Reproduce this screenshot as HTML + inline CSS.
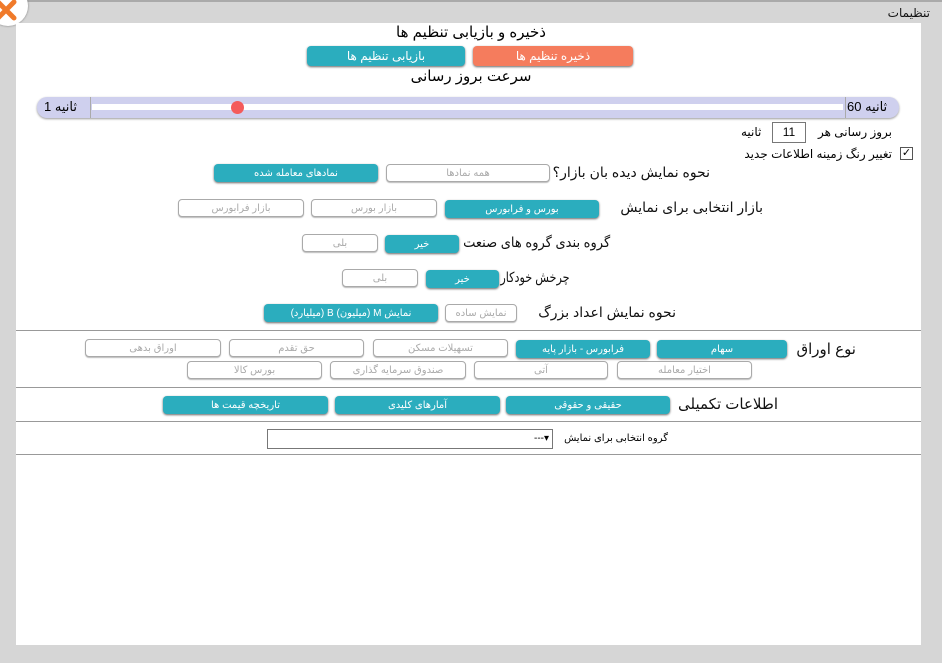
<!DOCTYPE html>
<html><head><meta charset="utf-8"><style>
*{box-sizing:border-box;margin:0;padding:0}
body{width:942px;height:663px;background:#d6d6d6;position:relative;overflow:hidden;font-family:"Liberation Sans","DejaVu Sans",sans-serif;}
.a{position:absolute;white-space:nowrap}
.panel{position:absolute;left:16px;top:23px;width:905px;height:622px;background:#fff}
.b{position:absolute;height:18px;border-radius:4px;font-size:10px;line-height:19px;text-align:center;color:#fff;background:#2badbe;box-shadow:0 1px 2px #666;direction:rtl;white-space:nowrap}
.w{background:#fff;color:#aaa;border:1px solid #aaa;box-shadow:0 1px 1px #bbb;line-height:17px}
.o{background:#f57c5d}
.l{position:absolute;font-size:14px;direction:rtl;color:#111;white-space:nowrap;z-index:2;transform-origin:right center}
.hr{position:absolute;left:16px;width:905px;height:1px;background:#999}
</style></head><body>
<div class="a" style="left:0;top:0;width:942px;height:2px;background:#aaa"></div>
<div class="a" style="right:12px;top:6px;font-size:12px;color:#111">تنظیمات</div>
<div class="a" style="left:-12px;top:-14px;width:40px;height:40px;border-radius:50%;background:#fff;box-shadow:0 0 2px #777"></div>
<svg class="a" style="left:0;top:0" width="20" height="22"><path d="M-2 2 L14 18 M14 2 L-2 18" stroke="#f07a2a" stroke-width="5" stroke-linecap="round"/></svg>
<div class="panel"></div>
<div class="a" style="left:0;width:942px;top:23px;text-align:center;font-size:15px">ذخیره و بازیابی تنظیم ها</div>
<div class="b" style="left:307px;top:46px;width:158px;height:20px;line-height:20px;font-size:12px">بازیابی تنظیم ها</div>
<div class="b o" style="left:473px;top:46px;width:160px;height:20px;line-height:20px;font-size:12px">ذخیره تنظیم ها</div>
<div class="a" style="left:0;width:942px;top:67px;text-align:center;font-size:15px">سرعت بروز رسانی</div>
<div class="a" style="left:37px;top:97px;width:862px;height:21px;background:#cfd0ee;border-radius:10px;box-shadow:0 1px 2px #999"></div>
<div class="a" style="left:92px;top:104px;width:751px;height:6px;background:#fff"></div>
<div class="a" style="left:90px;top:97px;width:1px;height:21px;background:#aaa"></div>
<div class="a" style="left:845px;top:97px;width:1px;height:21px;background:#aaa"></div>
<div class="a" style="left:231px;top:101px;width:13px;height:13px;border-radius:50%;background:#f45b5b"></div>
<div class="a" style="left:44px;top:99px;font-size:13px">ثانیه 1</div>
<div class="a" style="left:847px;top:99px;font-size:13px">ثانیه 60</div>
<div class="a" style="right:50px;top:125px;font-size:12px;direction:rtl">بروز رسانی هر</div>
<div class="a" style="left:772px;top:122px;width:34px;height:21px;border:1px solid #777;font-size:12px;text-align:center;line-height:19px">11</div>
<div class="a" style="left:741px;top:125px;font-size:12px">ثانیه</div>
<div class="a" style="left:900px;top:147px;width:13px;height:13px;border:1px solid #555;font-size:11px;line-height:11px;text-align:center">✓</div>
<div class="a" style="right:50px;top:147px;font-size:12px;direction:rtl">تغییر رنگ زمینه اطلاعات جدید</div>

<div class="l" style="right:232px;top:164px">نحوه نمایش دیده بان بازار؟</div>
<div class="b w" style="left:386px;top:164px;width:164px">همه نمادها</div>
<div class="b" style="left:214px;top:164px;width:164px">نمادهای معامله شده</div>

<div class="l" style="right:179px;top:199px">بازار انتخابی برای نمایش</div>
<div class="b" style="left:445px;top:200px;width:154px">بورس و فرابورس</div>
<div class="b w" style="left:311px;top:199px;width:126px">بازار بورس</div>
<div class="b w" style="left:178px;top:199px;width:126px">بازار فرابورس</div>

<div class="l" style="right:332px;top:234px;transform:scaleX(0.93)">گروه بندی گروه های صنعت</div>
<div class="b" style="left:385px;top:235px;width:74px">خیر</div>
<div class="b w" style="left:302px;top:234px;width:76px">بلی</div>

<div class="l" style="right:372px;top:269px;transform:scaleX(0.8)">چرخش خودکار</div>
<div class="b" style="left:426px;top:270px;width:73px">خیر</div>
<div class="b w" style="left:342px;top:269px;width:76px">بلی</div>

<div class="l" style="right:266px;top:304px">نحوه نمایش اعداد بزرگ</div>
<div class="b w" style="left:445px;top:304px;width:72px">نمایش ساده</div>
<div class="b" style="left:264px;top:304px;width:174px">نمایش M (میلیون) B (میلیارد)</div>

<div class="hr" style="top:330px"></div>
<div class="l" style="right:86px;top:340px;font-size:15px">نوع اوراق</div>
<div class="b" style="left:657px;top:340px;width:130px">سهام</div>
<div class="b" style="left:516px;top:340px;width:134px">فرابورس - بازار پایه</div>
<div class="b w" style="left:373px;top:339px;width:135px">تسهیلات مسکن</div>
<div class="b w" style="left:229px;top:339px;width:135px">حق تقدم</div>
<div class="b w" style="left:85px;top:339px;width:136px">اوراق بدهی</div>
<div class="b w" style="left:617px;top:361px;width:135px">اختیار معامله</div>
<div class="b w" style="left:474px;top:361px;width:134px">آتی</div>
<div class="b w" style="left:330px;top:361px;width:136px">صندوق سرمایه گذاری</div>
<div class="b w" style="left:187px;top:361px;width:135px">بورس کالا</div>

<div class="hr" style="top:387px"></div>
<div class="l" style="right:164px;top:395px;font-size:15px">اطلاعات تکمیلی</div>
<div class="b" style="left:506px;top:396px;width:164px">حقیقی و حقوقی</div>
<div class="b" style="left:335px;top:396px;width:165px">آمارهای کلیدی</div>
<div class="b" style="left:163px;top:396px;width:165px">تاریخچه قیمت ها</div>

<div class="hr" style="top:421px"></div>
<div class="a" style="right:274px;top:433px;font-size:10px;direction:rtl">گروه انتخابی برای نمایش</div>
<div class="a" style="left:267px;top:429px;width:286px;height:20px;border:1px solid #777;font-size:10px;line-height:18px;text-align:right;padding-right:3px">---▾</div>
<div class="hr" style="top:454px"></div>
</body></html>
